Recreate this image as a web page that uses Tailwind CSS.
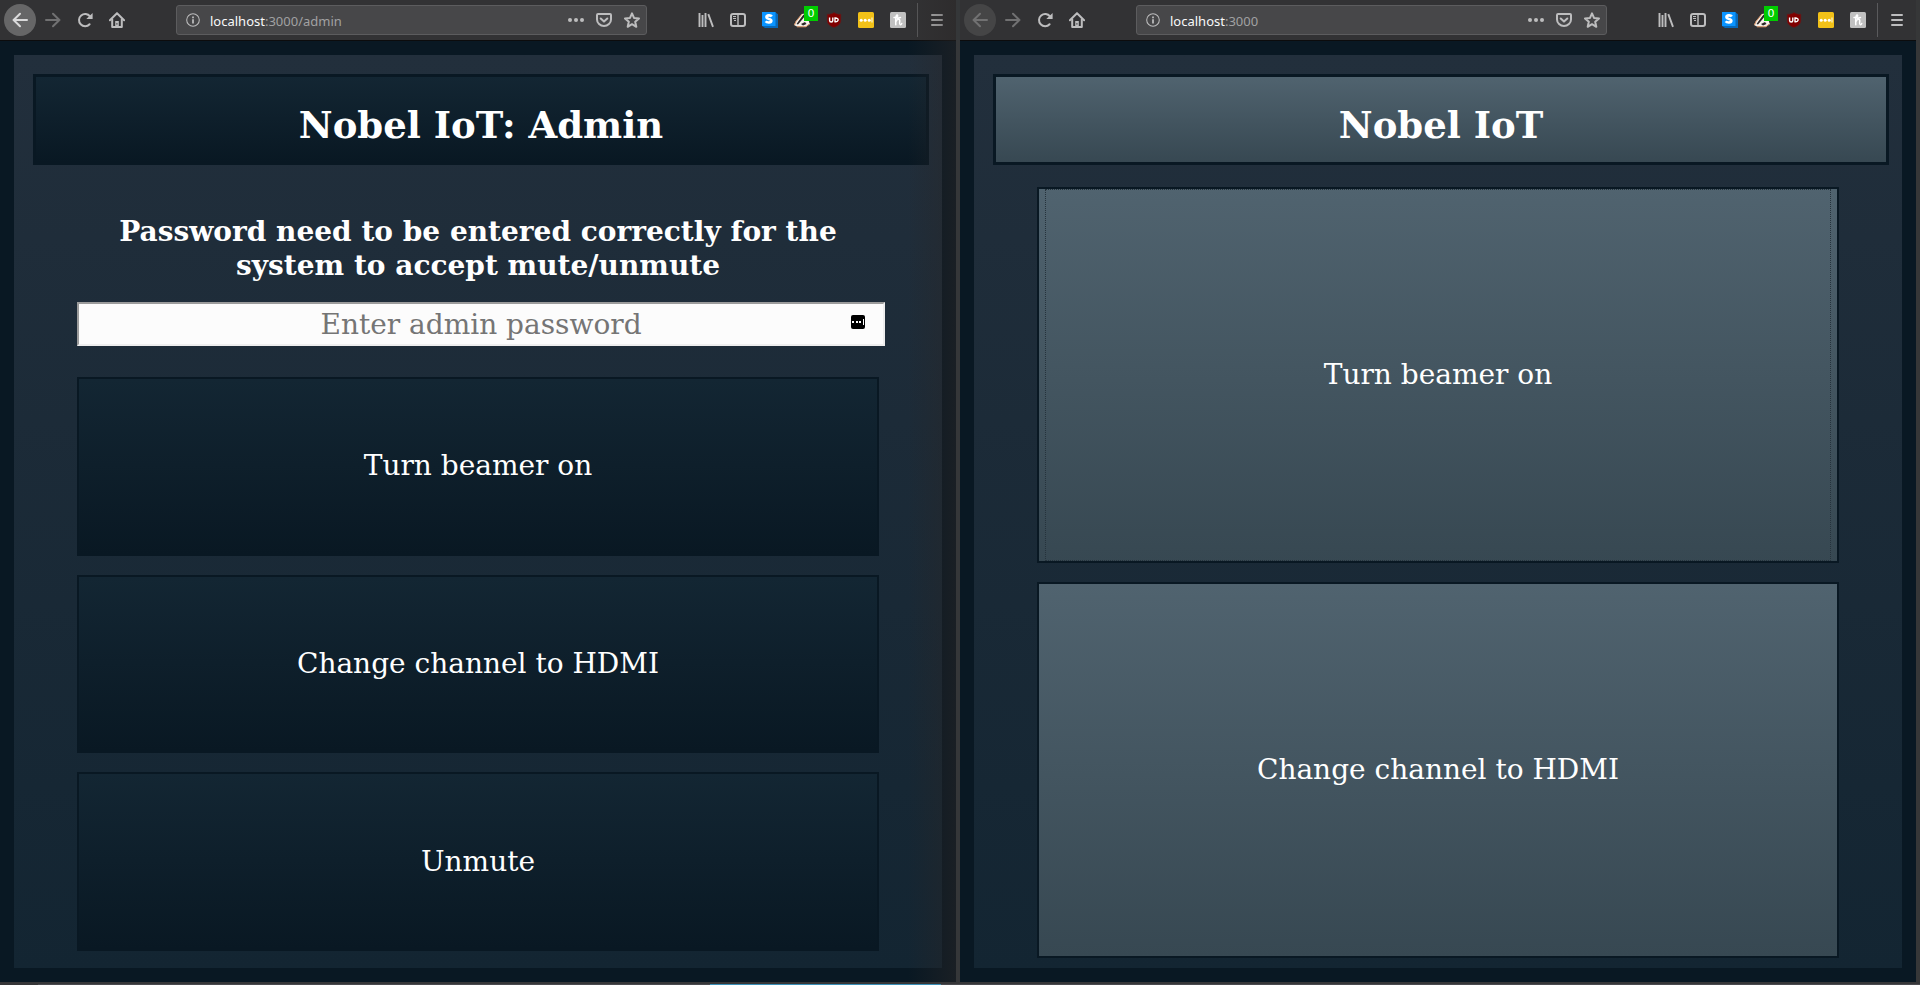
<!DOCTYPE html>
<html lang="en">
<head>
<meta charset="utf-8">
<title>Nobel IoT</title>
<script src="https://cdn.jsdelivr.net/npm/@tailwindcss/browser@4"></script>
</head>
<body class="h-screen overflow-hidden bg-[#363738] flex flex-col font-['DejaVu_Serif',serif] text-white">

<svg class="hidden" aria-hidden="true">
  <symbol id="back" viewBox="0 0 16 16"><path d="M15 8H1.5M8 1.7 1.6 8 8 14.3" fill="none" stroke="currentColor" stroke-width="2" stroke-linecap="round" stroke-linejoin="round"/></symbol>
  <symbol id="forward" viewBox="0 0 16 16"><path d="M1 8h13.5M8 1.7 14.4 8 8 14.3" fill="none" stroke="currentColor" stroke-width="2" stroke-linecap="round" stroke-linejoin="round"/></symbol>
  <symbol id="reload" viewBox="0 0 16 16"><path d="M12.6 12.2A6.1 6.1 0 1 1 13 4.4" fill="none" stroke="currentColor" stroke-width="2" stroke-linecap="round"/><path d="M15.6 1v5.9H9.3z" fill="currentColor"/></symbol>
  <symbol id="home" viewBox="0 0 16 16"><path d="M8 1.3.9 8.2M8 1.3l7.1 6.9" fill="none" stroke="currentColor" stroke-width="2" stroke-linecap="round"/><path d="M3.2 6.7V15h9.6V6.7" fill="none" stroke="currentColor" stroke-width="2" stroke-linejoin="round"/><path d="M6.2 15V9h3.6v6zM7.3 11.2h1.2v1.2H7.3z" fill="currentColor" fill-rule="evenodd"/></symbol>
  <symbol id="info" viewBox="0 0 16 16"><circle cx="8" cy="8" r="7.2" fill="none" stroke="currentColor" stroke-width="1.2"/><path d="M7 7h2v5H7zM7 4h2v2H7z" fill="currentColor"/></symbol>
  <symbol id="dots" viewBox="0 0 16 16"><circle cx="2" cy="8" r="2" fill="currentColor"/><circle cx="8" cy="8" r="2" fill="currentColor"/><circle cx="14" cy="8" r="2" fill="currentColor"/></symbol>
  <symbol id="pocket" viewBox="0 0 16 16"><path d="M2 2h12q1 0 1 1v4.500a7 6.500 0 0 1-14 0V3q0-1 1-1z" fill="none" stroke="currentColor" stroke-width="2"/><path d="M4.700 6.500 8 9.600l3.300-3.100" fill="none" stroke="currentColor" stroke-width="2" stroke-linecap="round" stroke-linejoin="round"/></symbol>
  <symbol id="star" viewBox="0 0 16 16"><path d="m8 1.300 2 4.600 5 .5-3.800 3.400 1.100 5L8 12.200l-4.300 2.600 1.100-5L1 6.400l5-.5z" fill="none" stroke="currentColor" stroke-width="2" stroke-linejoin="round"/></symbol>
  <symbol id="library" viewBox="0 0 16 16"><path d="M1.500 1v14M4.500 3v12M7.500 1v14M10.300 2.200 15 14.800" fill="none" stroke="currentColor" stroke-width="1.900"/></symbol>
  <symbol id="sidebar" viewBox="0 0 16 16"><rect x="1" y="2" width="14" height="12" rx="2" fill="none" stroke="currentColor" stroke-width="2"/><path d="M8 2v12" stroke="currentColor" stroke-width="1.400"/><path d="M3 4.500h3M3 6.500h3M4 8.500h2" stroke="currentColor" stroke-width="1"/></symbol>
  <symbol id="stylus" viewBox="0 0 16 16"><path d="M13 0l3 2.300V16H3l-3-2z" fill="#0868b8"/><path d="M0 0h13.500v14H0z" fill="#0a94ff"/><path d="M9.800 4.400C8.800 2.900 4.500 2.900 4.500 5.100 4.500 7.500 9.300 6.400 9.300 8.800 9.300 11 5 11 3.700 9.300" fill="none" stroke="#fff" stroke-width="2.700"/></symbol>
  <symbol id="badger" viewBox="0 0 16 16"><path d="M0 13 2 9 8 2l6-1 1 9 1 2-4 3-9-.5z" fill="#f7f1ea"/><path d="M2.500 12 5 8.500l4.500-6L11 4 7 9l-3 3.500zM7 12l4-2 1.500 2-3.500 1.500z" fill="#2b2727"/><path d="M.5 13 2 9.500 8 2M3 14.800h9l3.500-3" fill="none" stroke="#d58d5e" stroke-width="1"/></symbol>
  <symbol id="shield" viewBox="0 0 16 16"><path d="M8 .5C6 2 3.500 2.300 1.200 2.200V9c0 3 3.300 5.300 6.800 6.500 3.500-1.200 6.800-3.500 6.800-6.500V2.200C12.500 2.300 10 2 8 .5z" fill="#800000" stroke="#5d2020" stroke-width=".6"/><path d="M3.600 5.500v3c0 2 3.200 2 3.200 0v-3M9 6v3.700c4.200.4 4.200-4.100 0-3.700z" fill="none" stroke="#fff" stroke-width="1.400"/></symbol>
  <symbol id="pass" viewBox="0 0 16 16"><rect width="16" height="16" rx="1.500" fill="#f2c118"/><circle cx="3.200" cy="8.200" r="1.500" fill="#fff"/><circle cx="7.200" cy="8.200" r="1.500" fill="#fff"/><circle cx="11.200" cy="8.200" r="1.500" fill="#fff"/><path d="M14 5.500v5" stroke="#fff" stroke-width="1"/></symbol>
  <symbol id="honey" viewBox="0 0 16 16"><rect width="16" height="16" rx="1.500" fill="#c0c0c0"/><path d="M4 5.500c3 .5 4.500-1.500 3.300-2.500C5.800 2.500 5.500 7 5.800 12.800M6 9.500c.8-2.500 3.800-3 3.800-.5 0 1.500-.8 3.500.4 3.700.9.100 1.300-.7 1.500-1.300M7.500 6.300l3-.8" fill="none" stroke="#fff" stroke-width="1.500" stroke-linecap="round"/></symbol>
  <symbol id="menu" viewBox="0 0 16 16"><path d="M3 3h10M3 8h10M3 13h10" stroke="currentColor" stroke-width="2" stroke-linecap="round"/></symbol>
</svg>

<div class="flex-1 min-h-0 grid grid-cols-2">

  <section class="relative flex flex-col min-h-0 border-r-4 border-[#353739] bg-[#091823]">
    <header class="h-[41px] shrink-0 flex items-center pl-1 pr-[3px] bg-[#323234] border-b border-[#0c0c0d] text-[#bdbdbe]">
      <button aria-label="Back" class="size-8 rounded-full grid place-items-center bg-[#666667] text-[#dadadb]"><svg class="size-4"><use href="#back"/></svg></button>
      <button aria-label="Forward" disabled class="w-[33px] h-8 grid place-items-center text-[#717172]"><svg class="size-4"><use href="#forward"/></svg></button>
      <button aria-label="Reload" class="size-8 grid place-items-center"><svg class="size-4"><use href="#reload"/></svg></button>
      <button aria-label="Home" class="size-8 grid place-items-center"><svg class="size-4"><use href="#home"/></svg></button>
      <div class="flex-1 h-[30px] mx-[43px] rounded-[3px] border border-[#5c5c5e] bg-[#474749] flex items-center pl-[9px] font-['Noto_Sans',sans-serif] text-[13px]">
        <svg class="size-[14px] mr-[10px]"><use href="#info"/></svg>
        <a href="#" class="flex-1 text-[#a1a1a2] leading-5 pt-px"><span class="text-[#f9f9fa]">localhost</span>:3000/admin</a>
        <button aria-label="Page actions" class="w-7 h-7 grid place-items-center"><svg class="size-4"><use href="#dots"/></svg></button>
        <button aria-label="Save to Pocket" class="w-7 h-7 grid place-items-center"><svg class="size-4"><use href="#pocket"/></svg></button>
        <button aria-label="Bookmark" class="w-7 h-7 grid place-items-center"><svg class="size-4"><use href="#star"/></svg></button>
      </div>
      <button aria-label="Library" class="size-8 grid place-items-center"><svg class="size-4"><use href="#library"/></svg></button>
      <button aria-label="Sidebar" class="size-8 grid place-items-center"><svg class="size-4"><use href="#sidebar"/></svg></button>
      <button aria-label="Stylus" class="size-8 grid place-items-center"><svg class="size-4"><use href="#stylus"/></svg></button>
      <button aria-label="Privacy Badger" class="relative size-8 grid place-items-center"><svg class="size-4"><use href="#badger"/></svg><span class="absolute left-[18px] top-[2px] w-[14px] h-[15px] bg-[#00cc00] text-white text-[11px] leading-[15px] text-center font-['DejaVu_Sans',sans-serif]">0</span></button>
      <button aria-label="Ad blocker" class="size-8 grid place-items-center"><svg class="size-4"><use href="#shield"/></svg></button>
      <button aria-label="Password manager" class="size-8 grid place-items-center"><svg class="size-4"><use href="#pass"/></svg></button>
      <button aria-label="Honey" class="size-8 grid place-items-center"><svg class="size-4"><use href="#honey"/></svg></button>
      <span class="w-px h-[34px] mx-[3px] bg-[#5a5a5c]"></span>
      <button aria-label="Menu" class="size-8 grid place-items-center"><svg class="size-4"><use href="#menu"/></svg></button>
    </header>
    <main class="flex-1 min-h-0 m-[14px] pt-[19px] pb-[17px] flex flex-col bg-linear-to-b from-[#222f3c] to-[#132532]">
      <h1 class="h-[91px] shrink-0 ml-[19px] mr-[13px] border-3 border-[#091823] bg-linear-to-b from-[#132633] to-[#091823] flex items-center justify-center pt-3 text-[37px] leading-none font-bold">Nobel IoT: Admin</h1>
      <form class="flex-1 min-h-0 flex flex-col mx-[63px] pt-[50px]">
        <label for="pw" class="block text-center text-[28px] leading-[34px] font-bold">Password need to be entered correctly for the system to accept mute/unmute</label>
        <div class="relative w-[calc(100%+6px)] mt-[19px] mb-[31px]">
          <input id="pw" type="password" placeholder="Enter admin password" class="block w-full h-11 bg-[#fcfcfc] border-2 border-t-[#9b9b9b] border-l-[#9b9b9b] border-r-[#eeeeee] border-b-[#eeeeee] text-center text-[28px] text-black placeholder:text-[#757575] outline-none">
          <svg class="absolute right-5 top-[13px] size-[14px]" viewBox="0 0 14 14" aria-hidden="true"><rect width="14" height="14" rx="2" fill="#000"/><path d="M1 6h2v2H1zM5 6h2v2H5zM8 6h2v2H8zM12 4h1v6h-1z" fill="#fff"/></svg>
        </div>
        <div class="flex-1 min-h-0 flex flex-col gap-[19px] text-[28px]">
          <button type="button" class="flex-1 border-2 border-[#091823] bg-linear-to-b from-[#132633] to-[#091823]">Turn beamer on</button>
          <button type="button" class="flex-1 border-2 border-[#091823] bg-linear-to-b from-[#132633] to-[#091823]">Change channel to HDMI</button>
          <button type="button" class="flex-1 border-2 border-[#091823] bg-linear-to-b from-[#132633] to-[#091823]">Unmute</button>
        </div>
      </form>
    </main>
    <div class="pointer-events-none absolute inset-y-0 right-0 w-12 bg-linear-to-r from-transparent to-[#2a2626]/50"></div>
  </section>

  <section class="flex flex-col min-h-0 border-r-4 border-[#363738] bg-[#091823]">
    <header class="h-[41px] shrink-0 flex items-center pl-1 pr-[3px] bg-[#323234] border-b border-[#0c0c0d] text-[#bdbdbe]">
      <button aria-label="Back" disabled class="size-8 rounded-full grid place-items-center bg-[#454546] text-[#717172]"><svg class="size-4"><use href="#back"/></svg></button>
      <button aria-label="Forward" disabled class="w-[33px] h-8 grid place-items-center text-[#717172]"><svg class="size-4"><use href="#forward"/></svg></button>
      <button aria-label="Reload" class="size-8 grid place-items-center"><svg class="size-4"><use href="#reload"/></svg></button>
      <button aria-label="Home" class="size-8 grid place-items-center"><svg class="size-4"><use href="#home"/></svg></button>
      <div class="flex-1 h-[30px] mx-[43px] rounded-[3px] border border-[#5c5c5e] bg-[#474749] flex items-center pl-[9px] font-['Noto_Sans',sans-serif] text-[13px]">
        <svg class="size-[14px] mr-[10px]"><use href="#info"/></svg>
        <a href="#" class="flex-1 text-[#a1a1a2] leading-5 pt-px"><span class="text-[#f9f9fa]">localhost</span>:3000</a>
        <button aria-label="Page actions" class="w-7 h-7 grid place-items-center"><svg class="size-4"><use href="#dots"/></svg></button>
        <button aria-label="Save to Pocket" class="w-7 h-7 grid place-items-center"><svg class="size-4"><use href="#pocket"/></svg></button>
        <button aria-label="Bookmark" class="w-7 h-7 grid place-items-center"><svg class="size-4"><use href="#star"/></svg></button>
      </div>
      <button aria-label="Library" class="size-8 grid place-items-center"><svg class="size-4"><use href="#library"/></svg></button>
      <button aria-label="Sidebar" class="size-8 grid place-items-center"><svg class="size-4"><use href="#sidebar"/></svg></button>
      <button aria-label="Stylus" class="size-8 grid place-items-center"><svg class="size-4"><use href="#stylus"/></svg></button>
      <button aria-label="Privacy Badger" class="relative size-8 grid place-items-center"><svg class="size-4"><use href="#badger"/></svg><span class="absolute left-[18px] top-[2px] w-[14px] h-[15px] bg-[#00cc00] text-white text-[11px] leading-[15px] text-center font-['DejaVu_Sans',sans-serif]">0</span></button>
      <button aria-label="Ad blocker" class="size-8 grid place-items-center"><svg class="size-4"><use href="#shield"/></svg></button>
      <button aria-label="Password manager" class="size-8 grid place-items-center"><svg class="size-4"><use href="#pass"/></svg></button>
      <button aria-label="Honey" class="size-8 grid place-items-center"><svg class="size-4"><use href="#honey"/></svg></button>
      <span class="w-px h-[34px] mx-[3px] bg-[#5a5a5c]"></span>
      <button aria-label="Menu" class="size-8 grid place-items-center"><svg class="size-4"><use href="#menu"/></svg></button>
    </header>
    <main class="flex-1 min-h-0 m-[14px] pt-[19px] pb-[10px] flex flex-col bg-linear-to-b from-[#222f3c] to-[#132532]">
      <h1 class="h-[91px] shrink-0 ml-[19px] mr-[13px] border-3 border-[#091823] bg-linear-to-b from-[#50636f] to-[#374852] flex items-center justify-center pt-3 text-[37px] leading-none font-bold">Nobel IoT</h1>
      <div class="flex-1 min-h-0 mx-[63px] pt-[22px] flex flex-col gap-[19px] text-[28px]">
        <button type="button" class="flex-1 flex border-2 px-[6px] border-[#091823] bg-linear-to-b from-[#50636f] to-[#374852]"><span class="flex-1 self-stretch flex items-center justify-center border border-dotted border-[#26333c]">Turn beamer on</span></button>
        <button type="button" class="flex-1 border-2 border-[#091823] bg-linear-to-b from-[#50636f] to-[#374852]">Change channel to HDMI</button>
      </div>
    </main>
  </section>
</div>

<footer class="h-[3px] shrink-0 flex flex-col justify-end bg-[#363638]">
  <div class="h-px flex">
    <span class="w-[2%]"></span><span class="w-[35%] bg-[#4a4a4f]"></span><span class="w-[12%] bg-[#3a8fb7]"></span><span class="flex-1 bg-[#4a4a4f]"></span>
  </div>
</footer>
</body>
</html>
